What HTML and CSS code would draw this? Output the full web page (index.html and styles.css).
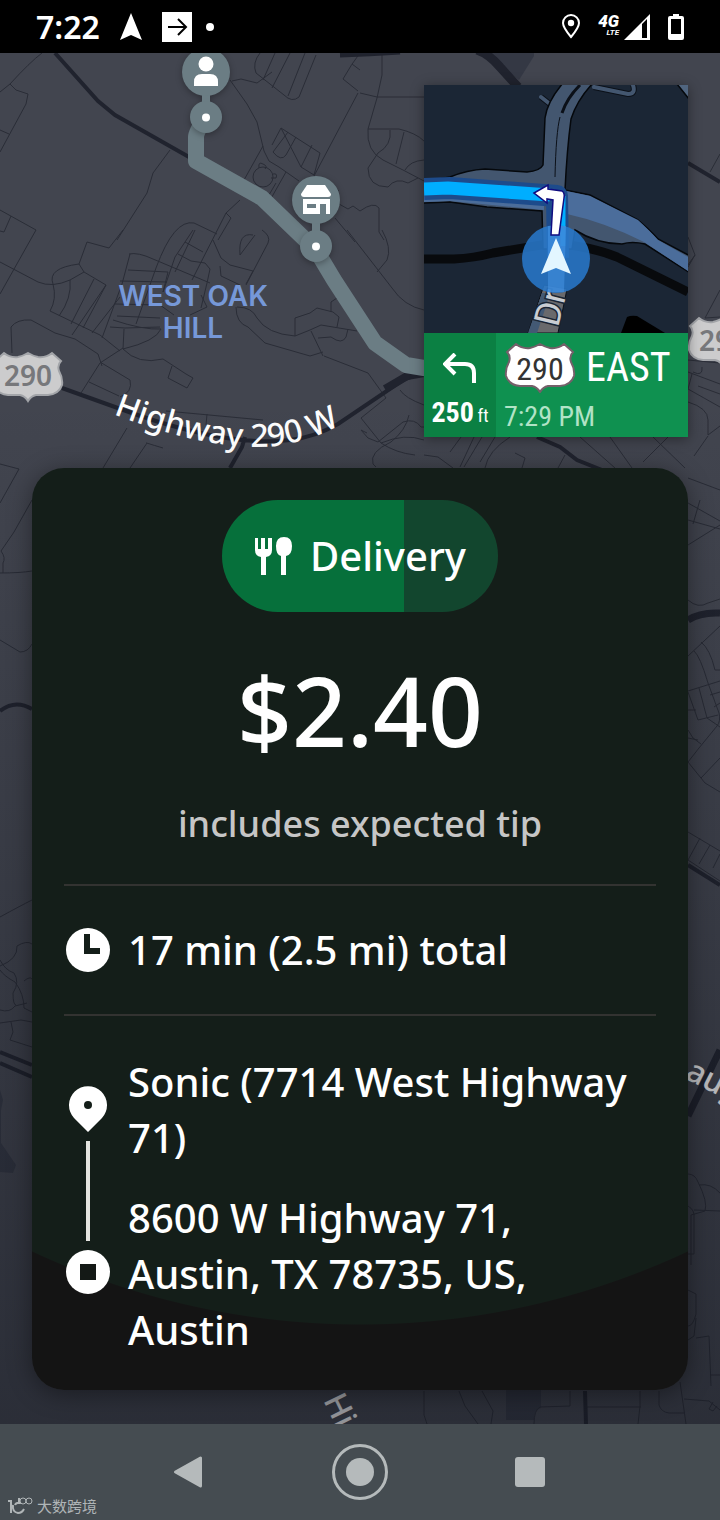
FILE: index.html
```html
<!DOCTYPE html>
<html lang="en">
<head>
<meta charset="utf-8">
<meta name="viewport" content="width=device-width, initial-scale=1">
<title>Delivery offer</title>
<link rel="stylesheet" href="styles.css">
</head>
<body>
<header class="status">
  <div class="status-left">
    <time class="clock">7:22</time>
    <svg class="icon" width="22" height="28" viewBox="0 0 22 28"><path fill="#fff" d="M11 0 22 27 11 22 0 27z"/></svg>
    <svg class="icon" width="30" height="30" viewBox="0 0 30 30"><path fill="#fff" d="M0 0h30v30H0z"/><path fill="none" stroke="#000" stroke-width="2" d="M6 15h18M16 7l8 8-8 8"/></svg>
    <span class="dot"></span>
  </div>
  <div class="status-right">
    <svg class="icon" width="18" height="26" viewBox="0 0 18 26"><path fill="none" stroke="#fff" stroke-width="2" d="M9 23C4 17 1 13 1 9a8 8 0 0 1 16 0c0 4-3 8-8 14z"/><circle cx="9" cy="9" r="3.200" fill="#fff"/></svg>
    <div class="signal">
      <div class="network"><b>4G</b><small>LTE</small></div>
      <svg width="26" height="26" viewBox="0 0 26 26"><path fill="#fff" fill-rule="evenodd" d="M26 0v26H0zM18 10v14h5V5z"/></svg>
    </div>
    <svg class="icon" width="16" height="26" viewBox="0 0 16 26"><path fill="#fff" fill-rule="evenodd" d="M5 0h6v2h3q2 0 2 2v20q0 2-2 2H2q-2 0-2-2V4q0-2 2-2h3zM3 5v15h10V5z"/></svg>
  </div>
</header>

<main class="stage">
  <svg class="map" viewBox="0 53 720 1371" preserveAspectRatio="xMidYMin slice" aria-hidden="true">
    <defs>
      <g id="shield"><path d="M0-24Q-5-21-10-20Q-18-19-24-24L-33-16Q-29-12-31-6Q-35 1-34 8Q-31 17-20 18H-8Q-3 19 0 24Q3 19 8 18H20Q31 17 34 8Q35 1 31-6Q29-12 33-16L24-24Q18-19 10-20Q5-21 0-24z"/></g>
      <linearGradient id="fade" x1="0" y1="0" x2="0" y2="1"><stop offset=".25" stop-color="#10131c" stop-opacity="0"/><stop offset="1" stop-color="#10131c" stop-opacity=".46"/></linearGradient>
      <path id="hwy" d="M113 414Q210 452 275 446Q320 440 355 415"/>
    </defs>
    <path fill="#42454f" d="M0 53h720v1371H0z"/>
    <g fill="#343844">
      <path d="M485 53h49v3l-15 24zM0 1090l3 10-2 10 0 33 15 22-3 8-13-1zM506 1390h35v18q-7 2-7 12h-28z"/>
    </g>
    <g class="streets">
      <path d="M42 53Q30 62 10 84L0 92M10 84l6 6 12 4-2 10-26 48M0 130l9 4M170 150l-17 23-6 20-30 47M0 210l36 20-36 64M11 216l-7 16-4-1M230 80l17 24 10 18 7 29 5 10 10 6 20 14M232 81l9-2 16 4 15-11M260 53q-8 10-4 20l28 22q8 8 15 2l17-42M275 53l-12 27M290 53l-18 35M305 53l-17 43M360 53q-8 10-17 26l15 12M358 93l-44 83 25 15M352 64l8 6M281 128l39 25-6 22-13-8zM272 145l9-17M288 132l-15 20q8 10 13 3l10-18M312 145l-11 22M263 146l-19 34M286 172l-17 30M240 200l-14 13-34 67M226 213l5 5-13 22M217 234l-23-11q-20-4-38 45l-20 56M258 193l8 7 10-17M339 204l9 5 5-3 7 5M335 218l20 24"/>
      <circle cx="263" cy="177" r="10"/><path d="M259 168q-1-7 4-4 5 2 2 5M273 174q5-1 3 4l-5 0"/>
      <path d="M0 262l38 20q14 6 32-2l14-8-5-8 8-22 22 6 14-18M79 264q-32 4-26 20 4 15-3 27l50 24 20 16M70 280q2 18-11 36M84 272l22 13-34 50M94 279l-23 45M106 285l-23 43M120 297l-28 36M130 254l-8 30-20 54M129 254q9-2 24 5l57 24M128 270l40 2-5 20 12-35 18-27M120 281l47 1M195 230l-20 42M185 242l18 10M178 254l13 7 14 2 5 6-3 14-6 25M213 240l8 18 9 7 23 6-7 13M220 266l1 10 19 9M253 235q-15-3-13 20l15-20M262 230q9 6 6 13l-22 42M115 304l45 1 14 10M117 316l43 2M110 327l15 1 35-1M113 320q30 10 48 9-5 12-38 20l1-20M123 349q15 16 40 10l23 15 7 4-6 10-19-10 4-12M123 348l-23 15-19 30M100 362l30 18q3 12-10 17M89 382l30 14M12 353l-1-26q6-8 20-7l24 13 20 6 23 15 4 12M190 315l17-8-6-12M236 307q0 16 12 20l17 16 45 13 13-4M237 307q15 0 20 11 10 16 38 18v-18l15-5 7-5 16 4 6 5-2 10M295 336l15-6 11-5 36 6M311 331l12 25M318 338l13-1q11 8 15 0l2-8M331 312v-10l6-4M324 356l44 17 18 25-25 20 20 25q15 10 34 12M367 433l-6-3 7 8 10 4 25-20q12-4 18 5l3 0M409 415q-3 15-18 27-22 10-18 22l3 3M381 443q24-10 43-3M347 230l45 58q12 18 32 22M382 230q10 18 5 30l-10 12M166 411l97 9M207 414l-1 11M127 428l-24 40M163 448q-20-6-16-5l-17 25M400 390q5 8 24 15"/>
      <path d="M382 55v20l-5 23-9 31q-2 22 15 31l20 10 21 11M360 93l17 4h47M368 129h31q17 4 25 12M390 130q2 15-12 23l-10 15q0 19 20 19 8-10 20-4l10-5M404 132l-5 20-3 12M405 170q5-9 19-10M360 211q14-10 19-3v24l5 8M720 154l-10 18M688 237l7 18-10 14M695 255l-7 12M720 290l-15 28 15-1M688 372l32 12M688 360l32 3M693 372q10 5 9-5M692 374l-4 15 32 18M698 386l22 8M688 402q20 6 20 18v15l12-9M708 436l-14 20M424 455l14 2 15 11M424 416l27 16M461 437l-11 15M474 437l-14 30M482 437l-18 30M495 437l-15 25M510 437q-22 14-25 31M515 453l10 5-3 10M565 455l-7 13M610 437l22 31M653 437l32 31M668 437l-25 25M580 437l35 31"/>
      <path d="M0 464l19 5L0 503M32 500l-18 32-13 19q5 7 2 12v10M0 573q20 0 32-2M0 640l20 12q8 0 12-8M688 478l32 12M688 503l32 18M688 520l32 9M700 500l-7 24M688 545l32-20M688 600q10 9 20 3l12-4M688 656l32-30M701 642q9 7 14 28h5M694 651q6 5 14 32l11 30q2 8-2 13l-18 22-11 14 17 21 15 9M688 691l32-10M688 692l10 28 20-5M699 688l8 30 13 9M688 710h8M710 695l10-3M714 707l6-4M688 738l10 2M688 730l5 8 8 6M701 778l19-20M688 832l32 19M700 838l-12 22 32 21M710 845l-11 19M720 854l-7 14"/>
      <path d="M0 917q20-11 32-17M0 966q18-7 17-20 10-6 15-2M0 960q5 10 14 13 6 9-1 20 0 12 3 12M0 970q4 6 15 12 9 12 9 26l8 4M24 981q6-5 8-2M0 1010q10 3 15-4l12-3M0 1023l21-3 11 2M11 1022l2 10-3 8 22 7M688 1174q7 0 10 8 10 20 7 29l-14 4v50M699 1185q12-2 21 8M688 1206q7 4 6 12M694 1210l26 1M688 1254h6v-36M688 1290l8 4v20q-3 12-8 12M696 1318l-2 18-6 4M696 1338l13-2 2 50M710 1375h10M680 1382l6 42M684 1399l25 2 11 9M713 1402l-4 7 4 2 4-5M424 1391v24l3 9M459 1391l6 15 13 18M482 1391l11 20-2 13M570 1391v15l-30 1q-6 3-6 17M587 1407h54M640 1391v15l-2 18M659 1391v14q2 7 10 8h15"/>
    </g>
    <g class="roads">
      <path d="M55 53l43 48 17 14 74 42"/>
      <path d="M62 388l53 19Q225 448 290 440 315 437 338 424L403 380 424 372M245 437l-3 10-12 21"/>
      <path stroke-width="9" d="M477 50q12 4 23 17l18 20"/>
      <path stroke-width="8" d="M385 389l22-13 17-3"/>
      <path d="M688 163l32 19M537 437l23 10 17 13 30 12M0 711q15-12 32-2M0 1052l32 13M0 1063l32 14M585 1391l1 33M688 865l32 20"/>
      <path stroke-width="7" d="M688 620q12-8 32-7M688 1116l32-66"/>
      <path stroke-width="5" d="M340 55q30-1 60-3"/>
    </g>
    <path class="route" d="M206 117q-10 15-10 20v24l66 37 54 52 18 30 41 63 31 22 30 5"/>
    <g fill="#6b7d84" class="pins">
      <path d="M202 90h8v20h-8zM312 215h8v20h-8z"/>
      <circle cx="206" cy="72" r="24"/><circle cx="206" cy="117" r="16"/>
      <circle cx="316" cy="200" r="24"/><circle cx="316" cy="246" r="16"/>
    </g>
    <g fill="#fff">
      <circle cx="206" cy="64" r="7.500"/><path d="M194 86v-4q0-8 8-8h8q8 0 8 8v4z"/>
      <circle cx="206" cy="117.500" r="4"/><circle cx="316" cy="246.500" r="4"/>
      <path d="M307 185h18l6 9q0 3-3 3h-24q-3 0-3-3z"/><path fill-rule="evenodd" d="M303 199h27v15h-4v-10h-6v10h-17zM307 204v4h9v-4z"/>
    </g>
    <g class="district"><text x="193" y="306">WEST OAK</text><text x="193" y="338">HILL</text></g>
    <text class="road-name"><textPath href="#hwy">Highway 290 W</textPath></text>
    <g fill="#cccccd" stroke="#a3a5a9" stroke-width="2"><use href="#shield" x="28" y="377"/><use href="#shield" x="723" y="342"/></g>
    <g class="shield-num"><text x="28" y="386">290</text><text x="723" y="351">290</text></g>
    <text class="road-name" transform="translate(684 1078) rotate(27)">aug</text>
    <text class="road-name" transform="translate(323 1400) rotate(64)">Hi</text>
    <path fill="url(#fade)" d="M0 53h720v1371H0z"/>
  </svg>

  <section class="turn" aria-label="Navigation">
    <svg class="turn-map" viewBox="424 85 264 248" preserveAspectRatio="xMidYMid slice" aria-hidden="true">
      <path fill="#1b2635" d="M424 85h264v248H424z"/>
      <path fill="none" stroke="#080a0d" stroke-width="9" d="M424 259h30q20-1 39-6 30-5 60-10 40 4 64 14l71 35"/>
      <path fill="#000" d="M621 333l6-16q4-2 10-1l28 17z"/>
      <path fill="none" stroke="#0b1018" stroke-width="6" d="M541 97l14 11M594 87l34 7q8 0 5-9"/>
      <path fill="none" stroke="#43566f" stroke-width="4" stroke-linecap="round" d="M541 97l14 11M594 87l34 7q8 0 5-9"/>
      <path fill="#43566f" stroke="#05080c" stroke-width="1.500" d="M422 182l28-5q17-7 35-8l42 3q13-1 16-7l2-47q2-16 18-35h30q-16 17-22 36-4 30-6 71l25 5 48 25q12 10 20 19l32 17v17l-45-29q-13-3-23 0-25 0-47-14l-3 19h-29l-1-38-55-4-37-5-28 1z"/>
      <path fill="#4b6d9b" d="M566 191l24 5 48 24q12 11 20 20l30 17v14l-44-29q-40-20-77-28zM424 193l120 11v6l-94-9-26 1z"/>
      <path fill="none" stroke="#0b1018" stroke-width="3" d="M580 85q-13 13-18 28"/><path fill="none" stroke="#0b1018" d="M560 117q-4 15-5 60"/>
      <path fill="#69696c" stroke="#0b1018" d="M544 285l23 4-9 44h-30z"/><path fill="#435974" d="M542 293h8q-6 20-13 40h-9z"/>
      <path fill="none" stroke="#1d4b8b" stroke-width="22" stroke-linejoin="round" d="M424 189l26-1 107 8 1 62"/>
      <path fill="none" stroke="#00aeff" stroke-width="13" d="M424 189l24-1 102 7"/>
      <path fill="none" stroke="#00aeff" stroke-width="5" d="M563 196v50"/>
      <text class="street" transform="translate(558 328) rotate(-76)">Dr</text>
      <circle cx="556" cy="259" r="34" fill="#2877c9" fill-opacity=".88"/>
      <path fill="#5aaafc" fill-opacity=".35" d="M548 226h18l-2 66h-16z"/>
      <path fill="#fff" stroke="#100c80" stroke-width="1.500" d="M534 193l14-8v4l14 2q3 2 2 7l-5 37h-8l2-35-6-1v4z"/>
      <path fill="#e3f6ff" d="M556 238l15 36-15-6-15 6z"/>
      <path fill="#50657f" stroke="#05080c" stroke-width="1.500" d="M677 84l12 15v-15z"/>
    </svg>
    <div class="turn-bar">
      <div class="turn-distance">
        <svg width="34" height="30" viewBox="0 0 34 30"><path fill="none" stroke="#fff" stroke-width="4" d="M12 1 2 11l10 10M2 11h20q9 0 9 9v10"/></svg>
        <div><b>250</b> <small>ft</small></div>
      </div>
      <div class="turn-road">
        <div class="turn-name">
          <svg width="72" height="50" viewBox="-36 -25 72 50"><use href="#shield" fill="#fff" stroke="#75606a" stroke-width="2"/><text class="turn-num" x="0" y="12">290</text></svg>
          <span>EAST</span>
        </div>
        <time class="eta">7:29 PM</time>
      </div>
    </div>
  </section>

  <article class="offer">
    <div class="badge">
      <svg width="38" height="38" viewBox="0 0 38 38"><path fill="#fff" d="M1 1h3v11h3V1h4v11h3V1h4v12q0 6-6 7v18H7V20q-6-1-6-7zM22 9q0-9 8-9t8 9q0 9-6 10v19h-5V19q-5-1-5-10z"/></svg>
      <span>Delivery</span>
    </div>
    <h1 class="price">$2.40</h1>
    <p class="note">includes expected tip</p>
    <div class="trip">
      <svg width="48" height="44" viewBox="0 0 48 44"><circle cx="24" cy="22" r="22" fill="#fff"/><path fill="#141e19" d="M20 6h6v14h10v6H20z"/></svg>
      <span>17 min (2.5 mi) total</span>
    </div>
    <div class="stops">
      <div class="timeline" aria-hidden="true">
        <svg width="38" height="46" viewBox="0 0 38 46"><path fill="#fff" d="M19 46 5 32A19 19 0 1 1 33 32z"/><circle cx="19" cy="19" r="4" fill="#141e19"/></svg>
        <span class="line"></span>
        <svg width="44" height="44" viewBox="0 0 44 44"><circle cx="22" cy="22" r="22" fill="#fff"/><path fill="#141916" d="M14 14h16v16H14z"/></svg>
      </div>
      <div class="addresses">
        <p>Sonic (7714 West Highway 71)</p>
        <p>8600 W Highway 71, Austin, TX 78735, US, Austin</p>
      </div>
    </div>
  </article>
</main>

<nav class="system">
  <div class="watermark">
    <svg width="25" height="18" viewBox="0 0 25 18"><path fill="none" stroke="currentColor" stroke-width="2" d="M0 4h3v12M13 6q-5-1-6 2M5 8q-1 7 5 8 4 0 6-4M11 1v6"/><circle cx="15" cy="4" r="3" fill="none" stroke="currentColor"/><circle cx="21" cy="4" r="3" fill="none" stroke="currentColor"/></svg>
    <span lang="zh">大数跨境</span>
  </div>
  <button type="button" aria-label="Back"><svg width="56" height="56" viewBox="0 0 56 56"><path fill="#b5babb" stroke="#b5babb" stroke-width="3" stroke-linejoin="round" d="M13.500 28 38.500 14v28z"/></svg></button>
  <button type="button" aria-label="Home"><svg width="56" height="56" viewBox="0 0 56 56"><circle cx="28" cy="28" r="26.500" fill="none" stroke="#b5babb" stroke-width="3"/><circle cx="28" cy="28" r="14" fill="#b5babb"/></svg></button>
  <button type="button" aria-label="Recents"><svg width="56" height="56" viewBox="0 0 56 56"><rect x="13" y="13" width="30" height="30" rx="3" fill="#b5babb"/></svg></button>
</nav>
</body>
</html>
```
FILE: styles.css
```css
* { box-sizing: border-box; }
body {
  margin: 0;
  min-height: 100vh;
  display: flex;
  flex-direction: column;
  background: #000;
  color: #fff;
  font-family: "Noto Sans", "Liberation Sans", sans-serif;
}
svg { display: block; }
p, h1 { margin: 0; }

.status {
  display: flex;
  justify-content: space-between;
  align-items: center;
  height: 53px;
  padding: 0 36px;
}
.status-left, .status-right { display: flex; align-items: center; }
.status-left { gap: 20px; }
.status-right { gap: 18px; }
.clock { font-size: 32px; font-weight: 600; line-height: 32px; }
.dot { width: 8px; height: 8px; margin-left: -6px; border-radius: 50%; background: #fff; }
.signal { display: flex; align-items: center; gap: 5px; }
.network { display: flex; flex-direction: column; font-style: italic; font-family: Roboto, sans-serif; }
.network b { font-size: 17px; font-weight: 900; line-height: 13px; }
.network small { font-size: 8px; font-weight: 700; line-height: 10px; align-self: flex-end; }

.stage {
  position: relative;
  flex: 1;
  display: flex;
  flex-direction: column;
  gap: 31px;
  padding: 32px;
  overflow: hidden;
}
.map { position: absolute; inset: 0; width: 100%; height: 100%; }
.streets { fill: none; stroke: #2a2d37; stroke-width: 1; }
.roads { fill: none; stroke: #20232e; stroke-width: 4; }
.route { fill: none; stroke: #6b7d84; stroke-width: 16; stroke-linejoin: round; }
.pins { filter: drop-shadow(0 2px 3px rgba(0, 0, 0, .3)); }
.district { fill: #7698d8; font-size: 28px; font-weight: 600; font-family: Inter, sans-serif; text-anchor: middle; }
.road-name { fill: #fff; font-size: 32px; font-weight: 500; }
.shield-num { fill: #77787b; font-size: 28px; font-weight: 600; text-anchor: middle; }

.turn {
  position: relative;
  align-self: flex-end;
  width: 264px;
  box-shadow: 0 2px 12px rgba(0, 0, 0, .4);
  font-family: "Roboto Condensed", Roboto, sans-serif;
}
.turn-map { width: 100%; height: 248px; }
.street { fill: #c9cdd2; stroke: #1b2635; stroke-width: 3; paint-order: stroke; font-size: 36px; font-family: Roboto, sans-serif; }
.turn-bar { display: flex; height: 104px; line-height: 28px; }
.turn-distance {
  display: flex;
  flex-direction: column;
  align-items: center;
  justify-content: space-between;
  width: 72px;
  padding: 20px 4px 6px;
  background: #0b8043;
  white-space: nowrap;
}
.turn-distance b { font-size: 28px; }
.turn-distance small { font-size: 18px; }
.turn-road {
  flex: 1;
  display: flex;
  flex-direction: column;
  justify-content: space-between;
  padding: 10px 8px 6px;
  background: #0f9150;
}
.turn-name { display: flex; align-items: center; gap: 10px; font-size: 40px; }
.turn-num { fill: #333; font-size: 32px; text-anchor: middle; }
.eta { font-size: 28px; color: #b1e3c6; }

.offer {
  position: relative;
  display: flex;
  flex-direction: column;
  padding: 32px;
  border-radius: 32px;
  background: radial-gradient(circle 773px at 50% calc(100% - 838px), #141e19 772px, #141414 773px);
  box-shadow: 0 4px 24px rgba(0, 0, 0, .4);
  font-size: 40px;
  font-weight: 500;
  line-height: 56px;
}
.badge {
  align-self: center;
  display: flex;
  align-items: center;
  gap: 18px;
  height: 112px;
  padding: 0 32px;
  border-radius: 56px;
  background: linear-gradient(90deg, #06703b 66%, #12462e 66%);
}
.price { margin-top: 42px; font-size: 96px; font-weight: 500; line-height: 112px; text-align: center; }
.note { margin-top: 30px; padding-bottom: 32px; font-size: 36px; color: #c6c6c6; text-align: center; }
.trip {
  display: flex;
  align-items: center;
  gap: 16px;
  padding: 36px 0;
  border: solid #333331;
  border-width: 2px 0;
}
.stops { display: flex; gap: 16px; padding-top: 38px; }
.timeline {
  flex: none;
  width: 48px;
  display: flex;
  flex-direction: column;
  align-items: center;
  gap: 9px;
  padding: 32px 0 64px;
}
.line { flex: 1; width: 4px; background: #e4e4e0; }
.addresses { flex: 1; display: flex; flex-direction: column; gap: 24px; padding-right: 16px; }

.system {
  position: relative;
  display: flex;
  justify-content: center;
  align-items: center;
  gap: 114px;
  height: 96px;
  background: #454c51;
}
.system button { padding: 0; border: 0; background: none; }
.watermark {
  position: absolute;
  left: 8px;
  bottom: 4px;
  display: flex;
  align-items: center;
  gap: 4px;
  color: #b0b5b7;
  font-family: "Noto Sans CJK SC", sans-serif;
  font-size: 15px;
  line-height: 20px;
}
```
